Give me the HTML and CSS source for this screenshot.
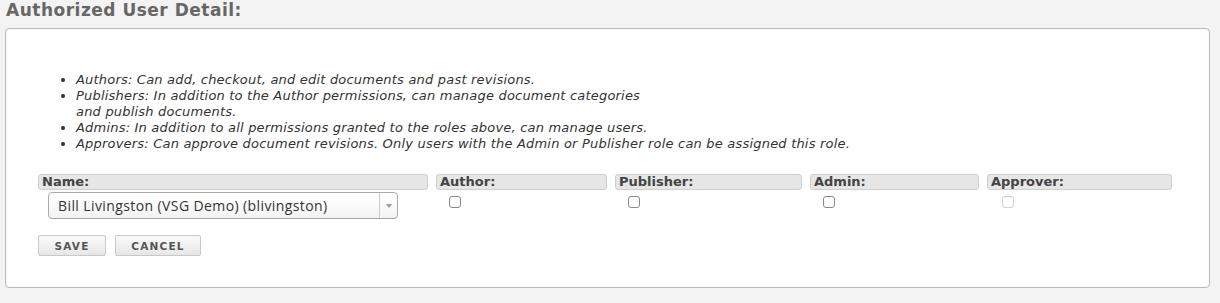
FILE: index.html
```html
<!DOCTYPE html>
<html>
<head>
    <title>Authorized User Detail</title>
    <link rel="stylesheet" href="styles.css">
</head>
<body>
    <h2 class="page-title">Authorized User Detail:</h2>
    <div class="panel">
        <ul class="role-help">
            <li>Authors: Can add, checkout, and edit documents and past revisions.</li>
            <li>Publishers: In addition to the Author permissions, can manage document categories<br>and publish documents.</li>
            <li>Admins: In addition to all permissions granted to the roles above, can manage users.</li>
            <li>Approvers: Can approve document revisions. Only users with the Admin or Publisher role can be assigned this role.</li>
        </ul>

        <form id="userForm">
            <div class="fields">
                <div class="field">
                    <div class="field-label">Name:</div>
                    <div class="combo">
                        <span class="combo-text">Bill Livingston (VSG Demo) (blivingston)</span>
                        <span class="combo-arrow"><b></b></span>
                    </div>
                </div>
                <div class="field">
                    <div class="field-label">Author:</div>
                    <input type="checkbox" class="check" name="author">
                </div>
                <div class="field">
                    <div class="field-label">Publisher:</div>
                    <input type="checkbox" class="check" name="publisher">
                </div>
                <div class="field">
                    <div class="field-label">Admin:</div>
                    <input type="checkbox" class="check" name="admin">
                </div>
                <div class="field">
                    <div class="field-label">Approver:</div>
                    <input type="checkbox" class="check" name="approver" disabled>
                </div>
            </div>

            <div class="actions">
                <button type="button" class="btn btn-save">Save</button>
                <button type="button" class="btn btn-cancel">Cancel</button>
            </div>
        </form>
    </div>
</body>
</html>
```

FILE: styles.css
```css
body {
    margin: 0;
    background-color: #f3f3f3;
    font-family: "DejaVu Sans", Verdana, sans-serif;
    color: #333;
}

.page-title {
    margin: 0;
    padding-left: 6px;
    font-size: 17px;
    line-height: 20px;
    font-weight: bold;
    letter-spacing: 0.5px;
    color: #666;
}

.panel {
    margin: 8px 10px 0 5px;
    padding: 0 0 31px 0;
    background-color: #fff;
    border: 1px solid #bbb;
    border-radius: 4px;
    box-shadow: inset 0 0 3px rgba(0, 0, 0, 0.06);
}

.role-help {
    margin: 43px 0 0 0;
    padding-left: 70px;
    font-size: 13px;
    line-height: 16px;
    letter-spacing: 0.2px;
    font-style: italic;
    color: #333;
}

.fields {
    display: grid;
    grid-template-columns: 390px 171px 187px 169px 185px;
    column-gap: 8px;
    margin: 22px 0 0 32px;
}

.field-label {
    height: 14px;
    line-height: 14px;
    padding-left: 3px;
    background-color: #e6e6e6;
    border: 1px solid #cfcfcf;
    border-radius: 3px;
    font-size: 13px;
    font-weight: bold;
    color: #444;
}

.combo {
    display: flex;
    align-items: stretch;
    width: 348px;
    height: 25px;
    margin: 2px 0 0 10px;
    border: 1px solid #aaa;
    border-radius: 4px;
    background: linear-gradient(#fff 20%, #f2f2f2 100%);
    font-family: "Open Sans", "Liberation Sans", Arial, sans-serif;
    font-size: 14px;
    letter-spacing: 0.4px;
    color: #333;
}

.combo-text {
    flex: 1;
    line-height: 25px;
    padding-left: 9px;
}

.combo-arrow {
    width: 17px;
    border-left: 1px solid #ccc;
    display: flex;
    align-items: center;
    justify-content: center;
}

.combo-arrow b {
    width: 0;
    height: 0;
    border-left: 3px solid transparent;
    border-right: 3px solid transparent;
    border-top: 4px solid #999;
}

.check {
    appearance: none;
    -webkit-appearance: none;
    display: block;
    width: 12px;
    height: 12px;
    margin: 6px 0 0 13px;
    border: 1px solid #8a8a8a;
    border-radius: 3px;
    background: #fff;
}

.check:disabled {
    border-color: #cfcfcf;
    margin-left: 15px;
}

.actions {
    display: flex;
    gap: 9px;
    margin: 16px 0 0 32px;
}

.btn {
    height: 21px;
    padding: 0;
    border: 1px solid #c8c8c8;
    border-radius: 2px;
    background: linear-gradient(#fafafa, #e6e6e6);
    font-family: "DejaVu Sans", Verdana, sans-serif;
    font-size: 10.5px;
    font-weight: bold;
    letter-spacing: 1.2px;
    text-transform: uppercase;
    color: #555;
    cursor: pointer;
}

.btn-save {
    width: 68px;
}

.btn-cancel {
    width: 86px;
}
```
